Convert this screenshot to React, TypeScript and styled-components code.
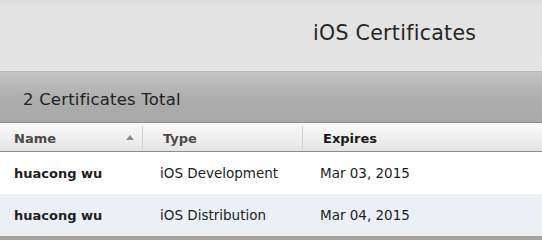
import styled, {createGlobalStyle} from "styled-components";

const GlobalStyle = createGlobalStyle`
  html, body {
    margin: 0;
    padding: 0;
    background: #e3e3e3;
  }
  body {
    font-family: "DejaVu Sans", "Liberation Sans", sans-serif;
    -webkit-font-smoothing: antialiased;
  }
`;

interface Certificate {
  name: string;
  type: string;
  expires: string;
}

const certificates: Certificate[] = [
  {name: 'huacong wu', type: 'iOS Development', expires: 'Mar 03, 2015'},
  {name: 'huacong wu', type: 'iOS Distribution', expires: 'Mar 04, 2015'},
];

const Window = styled.div`
  width: 542px;
  height: 240px;
  display: flex;
  flex-direction: column;
  overflow: hidden;
  background: #a9a9a9;
`;

const TitleBar = styled.div`
  height: 72px;
  box-sizing: border-box;
  display: flex;
  align-items: center;
  padding-left: 313px;
  padding-bottom: 6px;
  background: linear-gradient(#dcdcdc 0px, #e3e3e3 8px, #e4e4e4 100%);
  border-bottom: 1px solid #b9b9b9;
`;

const Title = styled.h1`
  margin: 0;
  font-size: 20.5px;
  font-weight: normal;
  color: #262626;
  letter-spacing: 0.3px;
`;

const SummaryBar = styled.div`
  height: 51px;
  box-sizing: border-box;
  display: flex;
  align-items: center;
  padding-left: 23px;
  padding-top: 4px;
  background: linear-gradient(#c4c4c4 0px, #b9b9b9 12px, #acacac 30px, #a9a9a9 100%);
  border-bottom: 1px solid #8c8c8c;
  font-size: 16.5px;
  letter-spacing: 0.2px;
  color: #222;
`;

const Table = styled.div`
  display: flex;
  flex-direction: column;
  background: #fff;
  border-bottom: 4px solid #a4a4a4;
`;

const HeaderRow = styled.div`
  height: 28px;
  display: grid;
  grid-template-columns: 143px 160px 1fr;
  background: linear-gradient(#fbfbfb, #e4e4e4);
  border-bottom: 1px solid #8e8e8e;
`;

const HeaderCell = styled.div<{ $active?: boolean; $first?: boolean; $divider?: boolean }>`
  position: relative;
  display: flex;
  align-items: center;
  padding-left: ${p => (p.$first ? 14 : 20)}px;
  padding-top: 3px;
  font-size: 13px;
  font-weight: bold;
  color: ${p => (p.$active ? '#1a1a1a' : '#4a4a4a')};
  border-right: 1px solid ${p => (p.$divider ? '#cfcfcf' : 'transparent')};
  margin: 3px 0;
`;

const SortArrow = styled.span`
  position: absolute;
  right: 8px;
  top: 9px;
  width: 0;
  height: 0;
  border-left: 4px solid transparent;
  border-right: 4px solid transparent;
  border-bottom: 5px solid #8a8a8a;
`;

const Row = styled.div<{ $alt?: boolean }>`
  height: 42px;
  display: grid;
  grid-template-columns: 160px 160px 1fr;
  align-items: center;
  background: ${p => (p.$alt ? '#ebf0f4' : '#ffffff')};
`;

const Cell = styled.div<{ $bold?: boolean }>`
  padding-left: ${p => (p.$bold ? 14 : 0)}px;
  font-size: ${p => (p.$bold ? 13 : 13.5)}px;
  font-weight: ${p => (p.$bold ? 'bold' : 'normal')};
  color: #1e1e1e;
`;

export default function App() {
  return (
    <Window>
      <GlobalStyle />
      <TitleBar>
        <Title>iOS Certificates</Title>
      </TitleBar>
      <SummaryBar>2 Certificates Total</SummaryBar>
      <Table>
        <HeaderRow>
          <HeaderCell $first $divider>
            Name
            <SortArrow />
          </HeaderCell>
          <HeaderCell $divider>Type</HeaderCell>
          <HeaderCell $active>Expires</HeaderCell>
        </HeaderRow>
        {certificates.map((c, i) => (
          <Row key={c.type} $alt={i % 2 === 1}>
            <Cell $bold>{c.name}</Cell>
            <Cell>{c.type}</Cell>
            <Cell>{c.expires}</Cell>
          </Row>
        ))}
      </Table>
    </Window>
  );
}
